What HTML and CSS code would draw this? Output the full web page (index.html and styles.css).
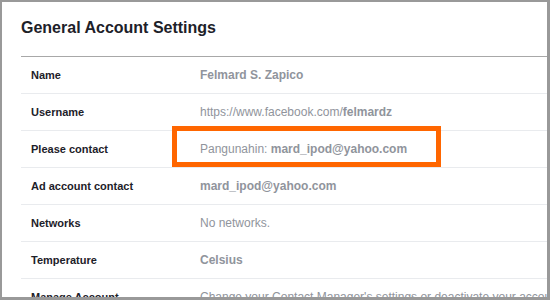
FILE: index.html
```html
<!doctype html>
<html>
    <head>
        <title>General Account Settings</title>
        <!-- Style -->
        <link rel="stylesheet" href="styles.css">
    </head>
    <body>
        <div class="frame">
            <div class="settings">
                <h2 class="settings-title">General Account Settings</h2>

                <div class="row">
                    <div class="label">Name</div>
                    <div class="value"><b>Felmard S. Zapico</b></div>
                </div>
                <div class="row">
                    <div class="label">Username</div>
                    <div class="value">https://www.facebook.com/<b>felmardz</b></div>
                </div>
                <div class="row">
                    <div class="label">Please contact</div>
                    <div class="value">Pangunahin: <b>mard_ipod@yahoo.com</b></div>
                </div>
                <div class="row">
                    <div class="label">Ad account contact</div>
                    <div class="value"><b>mard_ipod@yahoo.com</b></div>
                </div>
                <div class="row">
                    <div class="label">Networks</div>
                    <div class="value">No networks.</div>
                </div>
                <div class="row">
                    <div class="label">Temperature</div>
                    <div class="value"><b>Celsius</b></div>
                </div>
                <div class="row">
                    <div class="label">Manage Account</div>
                    <div class="value">Change your Contact Manager's settings or deactivate your account.</div>
                </div>
            </div>

            <!-- highlight box -->
            <div class="highlight"></div>
        </div>
    </body>
</html>
```

FILE: styles.css
```css
html, body {
    margin: 0;
    padding: 0;
    background: #fff;
}

.frame {
    position: relative;
    box-sizing: border-box;
    width: 550px;
    height: 300px;
    border-style: solid;
    border-color: #999;
    border-width: 2px 3px 3px 2px;
    overflow: hidden;
    font-family: "Liberation Sans", Arial, sans-serif;
}

.settings {
    padding-left: 19px;
}

.settings-title {
    margin: 0;
    padding: 16px 0 18px;
    font-size: 16px;
    line-height: 20px;
    font-weight: bold;
    color: #1d2129;
    border-bottom: 1px solid #a8a8a8;
}

.row {
    display: grid;
    grid-template-columns: 179px 1fr;
    align-items: center;
    height: 36px;
    border-bottom: 1px solid #e9ebee;
    white-space: nowrap;
}

.label {
    padding-left: 10px;
    font-size: 11px;
    font-weight: bold;
    color: #1d2129;
}

.value {
    font-size: 12px;
    color: #90949c;
}

.highlight {
    position: absolute;
    left: 170px;
    top: 124px;
    width: 269px;
    height: 41px;
    box-sizing: border-box;
    border: 5px solid #ff6600;
}
```
